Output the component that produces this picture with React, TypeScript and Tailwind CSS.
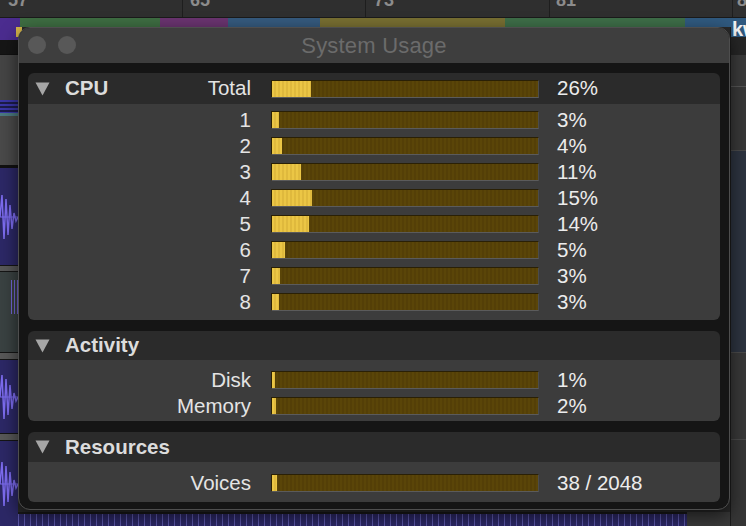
import React from 'react';

type Row = { label: string; fill: number; value: string };

const cpuRows: Row[] = [
  { label: '1', fill: 7, value: '3%' },
  { label: '2', fill: 10, value: '4%' },
  { label: '3', fill: 29, value: '11%' },
  { label: '4', fill: 40, value: '15%' },
  { label: '5', fill: 37, value: '14%' },
  { label: '6', fill: 13, value: '5%' },
  { label: '7', fill: 8, value: '3%' },
  { label: '8', fill: 7, value: '3%' },
];

function Triangle() {
  return (
    <svg width="15" height="14" viewBox="0 0 15 14" className="shrink-0">
      <polygon points="0.5,0.5 14.5,0.5 7.5,13.5" fill="#a6a6a6" />
    </svg>
  );
}

function Bar({ fill }: { fill: number }) {
  return (
    <div className="w-[268px] h-[18px] shrink-0 border border-[#2a2005] border-b-[#5b5b5b] border-r-[#4b4b4b] bg-[repeating-linear-gradient(90deg,#5a4508_0px,#5a4508_2px,#543f07_2px,#543f07_4px)]">
      <div
        className="h-full bg-[repeating-linear-gradient(90deg,#ebc645_0px,#ebc645_2px,#dfb93d_2px,#dfb93d_4px)]"
        style={{ width: fill }}
      />
    </div>
  );
}

function DataRow({ label, fill, value }: Row) {
  return (
    <div className="flex items-center h-[26px]">
      <div className="w-[223px] text-right text-[#e4e4e4]">{label}</div>
      <div className="ml-[20px]">
        <Bar fill={fill} />
      </div>
      <div className="ml-[18px] text-[#ececec]">{value}</div>
    </div>
  );
}

function Header({ title, h }: { title: string; h: string }) {
  return (
    <div className={`flex items-center bg-[#2b2b2b] pl-[7px] ${h}`}>
      <Triangle />
      <span className="ml-[15px] font-bold text-[#dcdcdc]">{title}</span>
    </div>
  );
}

function Waveform() {
  return (
    <svg width="18" height="60" viewBox="0 0 18 60">
      <polyline
        points="0,30 2,8 4,52 6,12 8,48 10,18 12,42 14,26 16,34 18,30"
        fill="none"
        stroke="#7d6cf0"
        strokeWidth="1.5"
      />
      <line x1="0" y1="30" x2="18" y2="30" stroke="#7d6cf0" strokeWidth="1" />
    </svg>
  );
}

export default function App() {
  return (
    <div className="relative w-[746px] h-[526px] overflow-hidden bg-[#262626] font-['Liberation_Sans',Arial,sans-serif] text-[20.5px] leading-none">
      {/* ruler */}
      <div className="flex h-[17px] overflow-hidden bg-[#2f2f2f] text-[18px] font-bold text-[#8c8c8c]">
        <div className="w-[183px] shrink-0 border-r border-[#1e1e1e] pl-[8px]"><div className="-mt-[9px]">57</div></div>
        <div className="w-[183px] shrink-0 border-r border-[#1e1e1e] pl-[7px]"><div className="-mt-[9px]">65</div></div>
        <div className="w-[184px] shrink-0 border-r border-[#1e1e1e] pl-[8px]"><div className="-mt-[9px]">73</div></div>
        <div className="w-[183px] shrink-0 border-r border-[#1e1e1e] pl-[6px]"><div className="-mt-[9px]">81</div></div>
        <div className="flex-1 pl-[4px]"><div className="-mt-[9px]">89</div></div>
      </div>

      {/* region colour strip */}
      <div className="flex h-[10px] border-t border-[#1a1a1a]">
        <div className="w-[20px] bg-[#4b2c8f]" />
        <div className="w-[140px] bg-[#3e6d42]" />
        <div className="w-[68px] bg-[#6a3470]" />
        <div className="w-[92px] bg-[#355a7e]" />
        <div className="w-[185px] bg-[#786f32]" />
        <div className="w-[180px] bg-[#3e6e48]" />
        <div className="flex-1 bg-[#305a80]" />
      </div>

      {/* track lanes */}
      <div className="flex h-[499px]">
        <div className="w-[18px] flex flex-col">
          <div className="h-[13px] bg-[#4b2c8f]" />
          <div className="h-[14px] bg-[#161616]" />
          <div className="h-[46px] bg-[#454545] border-t border-[#111]" />
          <div className="h-[13px] bg-[repeating-linear-gradient(180deg,#3a36a8_0px,#3a36a8_2px,#1c1c4a_2px,#1c1c4a_4px)]" />
          <div className="h-[52px] bg-[#4a4a4a] border-t-[3px] border-[#4b7a80]" />
          <div className="h-[3px] bg-[#111]" />
          <div className="h-[97px] bg-[#2c2866] flex items-center"><Waveform /></div>
          <div className="h-[7px] bg-[#585858] border-y border-[#151515]" />
          <div className="h-[80px] bg-[#3a4242] flex items-start pt-[8px] pl-[11px] gap-[2px]">
            <div className="w-[1px] h-[34px] bg-[#7466d8]" />
            <div className="w-[1px] h-[34px] bg-[#7466d8]" />
            <div className="w-[1px] h-[34px] bg-[#7466d8]" />
          </div>
          <div className="h-[8px] bg-[#585858] border-y border-[#151515]" />
          <div className="h-[73px] bg-[#2c2866] flex items-center"><Waveform /></div>
          <div className="h-[8px] bg-[#585858] border-y border-[#151515]" />
          <div className="flex-1 bg-[#2c2866] flex items-center"><Waveform /></div>
        </div>
        <div className="flex-1 flex flex-col">
          <div className="flex-1 bg-[#2a2a2a]" />
          <div className="h-[14px] flex">
            <div className="w-[669px] bg-[repeating-linear-gradient(90deg,#5b57a8_0px,#5b57a8_1px,#2c2866_1px,#2c2866_6px)] border-t-[2px] border-[#1a1a1a]" />
            <div className="flex-1 bg-[#3a3a3a]" />
          </div>
        </div>
        <div className="w-[16px] flex flex-col border-l border-[#1c1c1c]">
          <div className="h-[10px] bg-[#305a80]" />
          <div className="h-[18px] bg-[#262626]" />
          <div className="h-[32px] bg-[#3a3a3a] border-b border-[#555]" />
          <div className="h-[63px] bg-[#383838]" />
          <div className="h-[203px] bg-[#2d3440] border-y border-[#4a4a4a]" />
          <div className="h-[87px] bg-[#383838] border-b border-[#4a4a4a]" />
          <div className="flex-1 bg-[#363636]" />
        </div>
      </div>

      {/* clip label peeking out on the right */}
      <div className="absolute left-[732px] top-[19px] text-[20px] font-bold text-[#f2f2f2]">kw</div>
      <div className="absolute left-[16px] top-[27px] w-[6px] h-[10px] bg-[#d8b84a]" />

      {/* System Usage window */}
      <div className="absolute left-[18px] top-[27px] w-[712px] flex flex-col rounded-[12px] border border-[#4e4e4e] bg-[#151515] overflow-hidden shadow-[0_6px_18px_rgba(0,0,0,0.6)]">
        <div className="relative h-[35px] bg-[#3e3e3e] flex items-center justify-center">
          <div className="absolute left-[9px] top-[8px] flex gap-[12px]">
            <div className="w-[18px] h-[18px] rounded-full bg-[#585858]" />
            <div className="w-[18px] h-[18px] rounded-full bg-[#585858]" />
          </div>
          <span className="text-[22px] text-[#6b6b6b] tracking-[0.2px]">System Usage</span>
        </div>

        <div className="flex flex-col gap-[11px] pt-[10px] pb-[7px] px-[9px]">
          {/* CPU */}
          <div className="rounded-[6px] overflow-hidden">
            <div className="flex items-center h-[31px] bg-[#2b2b2b]">
              <div className="w-[223px] flex items-center pl-[7px]">
                <Triangle />
                <span className="ml-[15px] font-bold text-[#dcdcdc]">CPU</span>
                <span className="ml-auto text-[#e4e4e4]">Total</span>
              </div>
              <div className="ml-[20px]">
                <Bar fill={39} />
              </div>
              <div className="ml-[18px] text-[#ececec]">26%</div>
            </div>
            <div className="bg-[#3c3c3c] pt-[3px] pb-[5px]">
              {cpuRows.map((r) => (
                <DataRow key={r.label} {...r} />
              ))}
            </div>
          </div>

          {/* Activity */}
          <div className="rounded-[6px] overflow-hidden">
            <Header title="Activity" h="h-[29px]" />
            <div className="bg-[#3c3c3c] pt-[7px] pb-[2px]">
              <DataRow label="Disk" fill={3} value="1%" />
              <DataRow label="Memory" fill={4} value="2%" />
            </div>
          </div>

          {/* Resources */}
          <div className="rounded-[6px] overflow-hidden">
            <Header title="Resources" h="h-[30px]" />
            <div className="bg-[#3c3c3c] pt-[8px] pb-[6px]">
              <DataRow label="Voices" fill={5} value="38 / 2048" />
            </div>
          </div>
        </div>
      </div>
    </div>
  );
}
